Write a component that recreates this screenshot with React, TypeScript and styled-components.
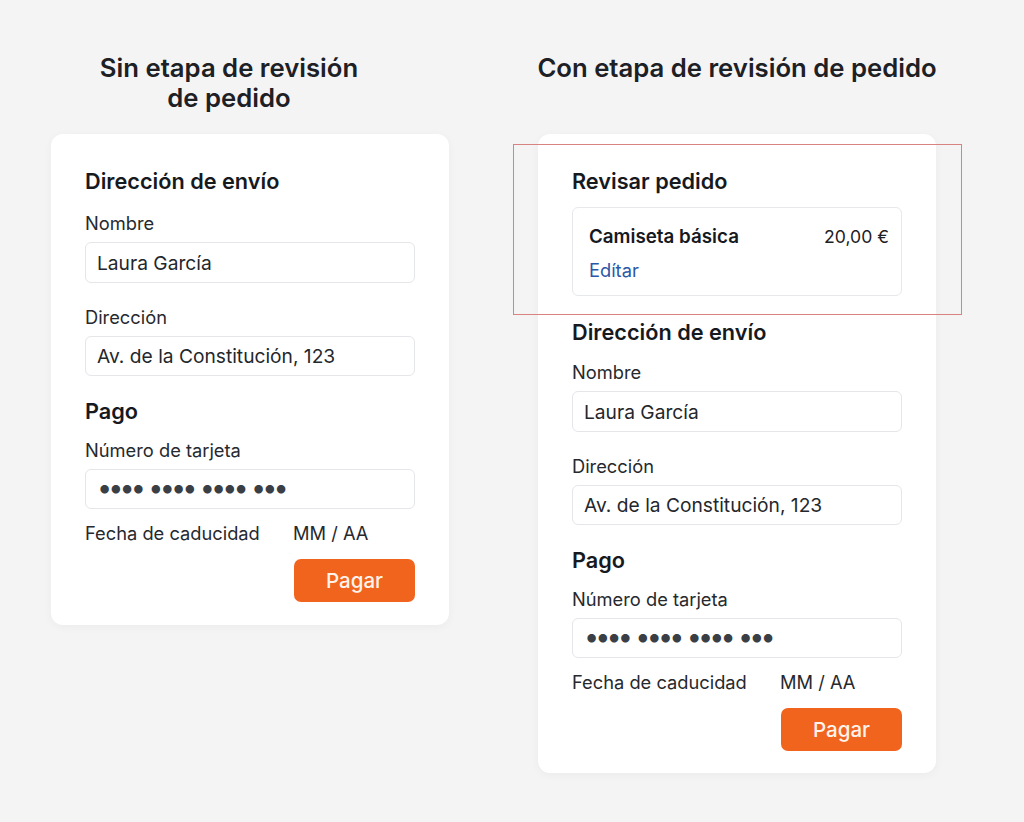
import React from "react";
import styled, { createGlobalStyle } from "styled-components";

const Global = createGlobalStyle`
  html, body { margin: 0; padding: 0; background: #f4f4f4; }
  body { font-family: Inter, "Noto Sans", sans-serif; color: #1d2025; }
`;

const Page = styled.div`
  width: 1024px;
  height: 822px;
  box-sizing: border-box;
  padding: 53px 0 0 51px;
  display: grid;
  grid-template-columns: 398px 398px;
  column-gap: 89px;
  align-items: start;
`;

const Column = styled.div`
  display: flex;
  flex-direction: column;
  position: relative;
`;

const TitleBox = styled.div`
  height: 81px;
  display: flex;
  justify-content: center;
`;

const Title = styled.h1<{ $width?: number; $shift?: number }>`
  margin: 0;
  width: ${(p) => (p.$width ? `${p.$width}px` : "auto")};
  flex-shrink: 0;
  white-space: ${(p) => (p.$width ? "normal" : "nowrap")};
  transform: translateX(${(p) => p.$shift ?? 0}px);
  font-size: 25.7px;
  line-height: 30px;
  font-weight: 600;
  text-align: center;
  color: #1d2025;
`;

const Card = styled.div<{ $pb: number }>`
  background: #ffffff;
  border-radius: 12px;
  box-shadow: 0 2px 10px rgba(0, 0, 0, 0.04);
  padding: 34px 34px ${(p) => p.$pb}px 34px;
  display: flex;
  flex-direction: column;
`;

const Heading = styled.h2<{ $mt?: number }>`
  margin: ${(p) => p.$mt ?? 0}px 0 0 0;
  font-size: 21.7px;
  line-height: 26px;
  font-weight: 600;
  color: #16191e;
`;

const Label = styled.div<{ $mt: number }>`
  margin-top: ${(p) => p.$mt}px;
  font-size: 18.3px;
  line-height: 22px;
  color: #26292e;
`;

const Field = styled.div<{ $h: number }>`
  margin-top: 8px;
  height: ${(p) => p.$h}px;
  box-sizing: border-box;
  border: 1px solid #e4e6e9;
  border-radius: 6px;
  padding: 0 11px;
  display: flex;
  align-items: center;
  font-size: 19.2px;
  color: #24272c;
`;

const Dots = styled.span`
  font-size: 27px;
  line-height: 1;
  letter-spacing: -3.9px;
  word-spacing: 2.5px;
  color: #3a3e45;
  transform: translateY(-2px);
`;

const ExpiryRow = styled.div<{ $mt: number }>`
  margin-top: ${(p) => p.$mt}px;
  display: grid;
  grid-template-columns: 208px 1fr;
  font-size: 18.3px;
  line-height: 22px;
  color: #26292e;
`;

const PayButton = styled.button<{ $mt: number }>`
  margin-top: ${(p) => p.$mt}px;
  align-self: flex-end;
  width: 121px;
  height: 43px;
  border: none;
  border-radius: 7px;
  background: #f1641e;
  color: #fff3ea;
  font-family: Inter, "Noto Sans", sans-serif;
  font-size: 20.5px;
  font-weight: 500;
`;

const ItemBox = styled.div`
  margin-top: 13px;
  border: 1px solid #e6e8eb;
  border-radius: 6px;
  padding: 18px 12px 14px 16px;
  display: flex;
  flex-direction: column;
`;

const ItemRow = styled.div`
  display: flex;
  justify-content: space-between;
  align-items: baseline;
  line-height: 22px;
`;

const ItemName = styled.span`
  font-size: 18.8px;
  font-weight: 600;
  color: #16191e;
`;

const ItemPrice = styled.span`
  font-size: 17.6px;
  color: #1d2025;
`;

const EditLink = styled.a`
  margin-top: 11px;
  font-size: 18.3px;
  line-height: 22px;
  color: #2c57a6;
  text-decoration: none;
`;

const Highlight = styled.div`
  position: absolute;
  left: -25px;
  top: 91px;
  width: 449px;
  height: 171px;
  box-sizing: border-box;
  border: 1.5px solid #d88380;
  pointer-events: none;
`;

const CARD_DOTS = "•••• •••• •••• •••";

function ShippingAndPayment({ gapAfterHeading, headingTop }: { gapAfterHeading: number; headingTop?: number }) {
  return (
    <>
      <Heading $mt={headingTop}>Dirección de envío</Heading>
      <Label $mt={gapAfterHeading}>Nombre</Label>
      <Field $h={41}>Laura García</Field>
      <Label $mt={23}>Dirección</Label>
      <Field $h={40}>Av. de la Constitución, 123</Field>
      <Heading $mt={22}>Pago</Heading>
      <Label $mt={15}>Número de tarjeta</Label>
      <Field $h={40}>
        <Dots>{CARD_DOTS}</Dots>
      </Field>
      <ExpiryRow $mt={13}>
        <span>Fecha de caducidad</span>
        <span>MM / AA</span>
      </ExpiryRow>
      <PayButton $mt={15}>Pagar</PayButton>
    </>
  );
}

export default function App() {
  return (
    <>
      <Global />
      <Page>
        <Column>
          <TitleBox>
            <Title $width={272} $shift={-21}>
              Sin etapa de revisión de pedido
            </Title>
          </TitleBox>
          <Card $pb={23}>
            <ShippingAndPayment gapAfterHeading={18} />
          </Card>
        </Column>
        <Column>
          <TitleBox>
            <Title>Con etapa de revisión de pedido</Title>
          </TitleBox>
          <Card $pb={22}>
            <Heading>Revisar pedido</Heading>
            <ItemBox>
              <ItemRow>
                <ItemName>Camiseta básica</ItemName>
                <ItemPrice>20,00 €</ItemPrice>
              </ItemRow>
              <EditLink>Edítar</EditLink>
            </ItemBox>
            <ShippingAndPayment gapAfterHeading={16} headingTop={23} />
          </Card>
          <Highlight />
        </Column>
      </Page>
    </>
  );
}
